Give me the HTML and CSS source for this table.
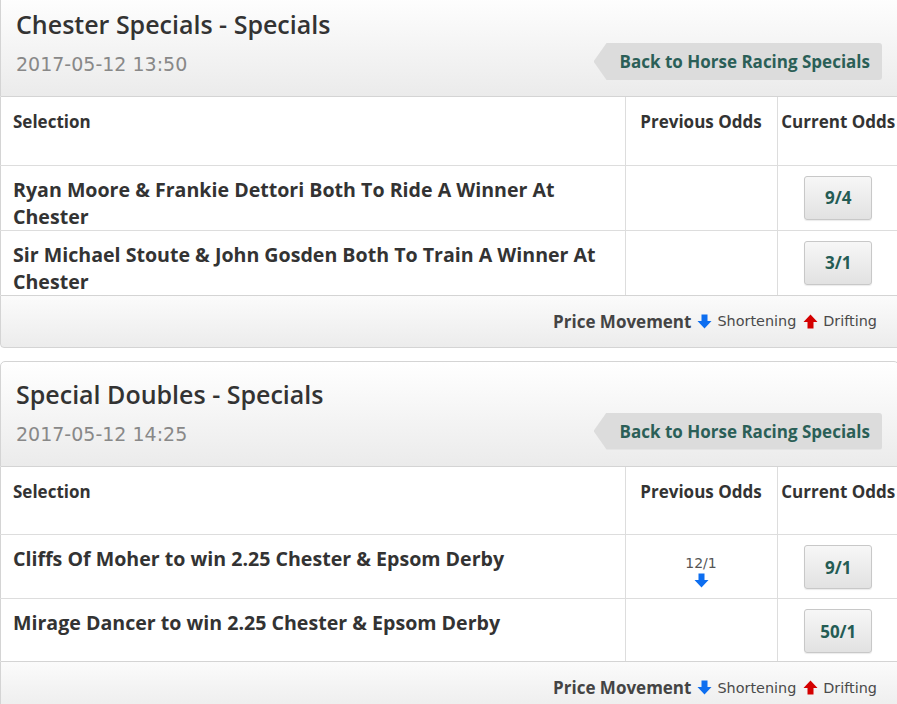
FILE: index.html
```html
<!DOCTYPE html>
<html>
<head>
<meta charset="utf-8">
<link rel="stylesheet" href="styles.css">
</head>
<body>
<div class="page">
  <section class="market">
    <header class="market-head">
      <div class="titles">
        <h2 class="market-title">Chester Specials - Specials</h2>
        <div class="market-date">2017-05-12 13:50</div>
      </div>
      <a class="back-btn" href="#">Back to Horse Racing Specials</a>
    </header>
    <table class="odds-table">
      <thead>
        <tr>
          <th class="col-sel">Selection</th>
          <th class="col-prev">Previous Odds</th>
          <th class="col-cur">Current Odds</th>
        </tr>
      </thead>
      <tbody>
        <tr>
          <td class="sel-name">Ryan Moore &amp; Frankie Dettori Both To Ride A Winner At Chester</td>
          <td class="prev"></td>
          <td class="cur"><button class="price">9/4</button></td>
        </tr>
        <tr>
          <td class="sel-name">Sir Michael Stoute &amp; John Gosden Both To Train A Winner At Chester</td>
          <td class="prev"></td>
          <td class="cur"><button class="price">3/1</button></td>
        </tr>
      </tbody>
    </table>
    <footer class="legend">
      <span class="legend-title">Price Movement</span>
      <svg class="arrow down" viewBox="0 0 15 15" width="15" height="15"><path d="M4.5 0.5h6v6.5h4L7.5 14.5 0.5 7h4z"/></svg>
      <span class="legend-text">Shortening</span>
      <svg class="arrow up" viewBox="0 0 15 15" width="15" height="15"><path d="M4.5 14.5h6V8h4L7.5 0.5 0.5 8h4z"/></svg>
      <span class="legend-text">Drifting</span>
    </footer>
  </section>

  <section class="market">
    <header class="market-head">
      <div class="titles">
        <h2 class="market-title">Special Doubles - Specials</h2>
        <div class="market-date">2017-05-12 14:25</div>
      </div>
      <a class="back-btn" href="#">Back to Horse Racing Specials</a>
    </header>
    <table class="odds-table">
      <thead>
        <tr>
          <th class="col-sel">Selection</th>
          <th class="col-prev">Previous Odds</th>
          <th class="col-cur">Current Odds</th>
        </tr>
      </thead>
      <tbody>
        <tr>
          <td class="sel-name">Cliffs Of Moher to win 2.25 Chester &amp; Epsom Derby</td>
          <td class="prev"><div class="prev-odds">12/1</div><svg class="arrow down" viewBox="0 0 15 15" width="15" height="15"><path d="M4.5 0.5h6v6.5h4L7.5 14.5 0.5 7h4z"/></svg></td>
          <td class="cur"><button class="price">9/1</button></td>
        </tr>
        <tr>
          <td class="sel-name">Mirage Dancer to win 2.25 Chester &amp; Epsom Derby</td>
          <td class="prev"></td>
          <td class="cur"><button class="price">50/1</button></td>
        </tr>
      </tbody>
    </table>
    <footer class="legend">
      <span class="legend-title">Price Movement</span>
      <svg class="arrow down" viewBox="0 0 15 15" width="15" height="15"><path d="M4.5 0.5h6v6.5h4L7.5 14.5 0.5 7h4z"/></svg>
      <span class="legend-text">Shortening</span>
      <svg class="arrow up" viewBox="0 0 15 15" width="15" height="15"><path d="M4.5 14.5h6V8h4L7.5 0.5 0.5 8h4z"/></svg>
      <span class="legend-text">Drifting</span>
    </footer>
  </section>
</div>
</body>
</html>
```
FILE: styles.css
```css
html, body {
  margin: 0;
  padding: 0;
  background: #fff;
  overflow: hidden;
}
body {
  font-family: "Open Sans", sans-serif;
  color: #333;
}
.page {
  width: 899px;
  margin-top: -9px;
}
.market {
  margin-bottom: 13px;
}
.market-head {
  display: flex;
  justify-content: space-between;
  align-items: flex-start;
  height: 106px;
  box-sizing: border-box;
  border: 1px solid #d4d4d4;
  border-radius: 5px 5px 0 0;
  background: linear-gradient(#ffffff, #ebebeb);
  padding: 0 16px 0 15px;
}
.titles {
  padding-top: 15px;
}
.market-title {
  margin: 0;
  font-size: 25px;
  line-height: 34px;
  font-weight: 600;
  color: #333;
}
.market-date {
  margin-top: 10px;
  font-family: "DejaVu Sans", sans-serif;
  font-size: 19px;
  line-height: 26px;
  color: #888;
}
.back-btn {
  margin-top: 51px;
  height: 37px;
  line-height: 37px;
  padding: 0 12px 0 26px;
  background: #dcdcdc;
  color: #2b5f57;
  font-size: 17px;
  font-weight: 700;
  text-decoration: none;
  clip-path: polygon(0 50%, 13px 0, 100% 0, 100% 100%, 13px 100%);
  border-radius: 0 3px 3px 0;
}
.odds-table {
  width: 100%;
  border-collapse: collapse;
  border-left: 1px solid #d4d4d4;
}
.odds-table th {
  height: 68px;
  box-sizing: border-box;
  vertical-align: top;
  padding: 13px 12px 0;
  font-size: 17px;
  font-weight: 700;
  line-height: 24px;
  color: #333;
  border-bottom: 1px solid #ddd;
}
.odds-table th.col-sel { text-align: left; }
.odds-table th.col-prev { width: 152px; padding: 13px 0 0; border-left: 1px solid #ddd; text-align: center; }
.odds-table th.col-cur { width: 122px; padding: 13px 0 0; border-left: 1px solid #ddd; text-align: center; }
.odds-table td {
  vertical-align: top;
  padding: 10px 0 9px;
  border-bottom: 1px solid #ddd;
}
.odds-table tbody tr:last-child td { border-bottom: none; padding-bottom: 8px; }
.odds-table td.sel-name,
.odds-table tbody tr:last-child td.sel-name {
  padding: 10px 12px 0;
  font-size: 19.6px;
  font-weight: 700;
  line-height: 27px;
  color: #333;
}
.odds-table td.prev { border-left: 1px solid #ddd; text-align: center; }
.odds-table td.cur { border-left: 1px solid #ddd; text-align: center; }
.prev-odds {
  font-family: "DejaVu Sans", sans-serif;
  font-size: 14px;
  line-height: 18px;
  color: #555;
  margin-top: 9px;
}
.prev .arrow { display: block; margin: 1px auto 0; }
.price {
  width: 68px;
  height: 44px;
  border: 1px solid #c8c8c8;
  border-radius: 3px;
  background: linear-gradient(#f7f7f7, #e2e2e2);
  font-family: "Open Sans", sans-serif;
  font-size: 17px;
  font-weight: 700;
  color: #245c54;
  box-shadow: 0 1px 1px rgba(0,0,0,0.08);
  padding: 0;
}
.legend {
  height: 53px;
  box-sizing: border-box;
  display: flex;
  align-items: center;
  justify-content: flex-end;
  padding-right: 21px;
  border: 1px solid #d4d4d4;
  border-radius: 0 0 0 4px;
  background: linear-gradient(#fbfbfb, #ececec);
}
.legend-title {
  font-size: 17px;
  font-weight: 700;
  color: #444;
  margin-right: 6px;
}
.legend-text {
  font-family: "DejaVu Sans", sans-serif;
  font-size: 14.4px;
  color: #4a4a4a;
  margin-left: 5px;
  margin-right: 7px;
}
.legend-text:last-child { margin-right: 0; }
.arrow.down { fill: #0d6ef0; }
.arrow.up { fill: #d40000; }
```
